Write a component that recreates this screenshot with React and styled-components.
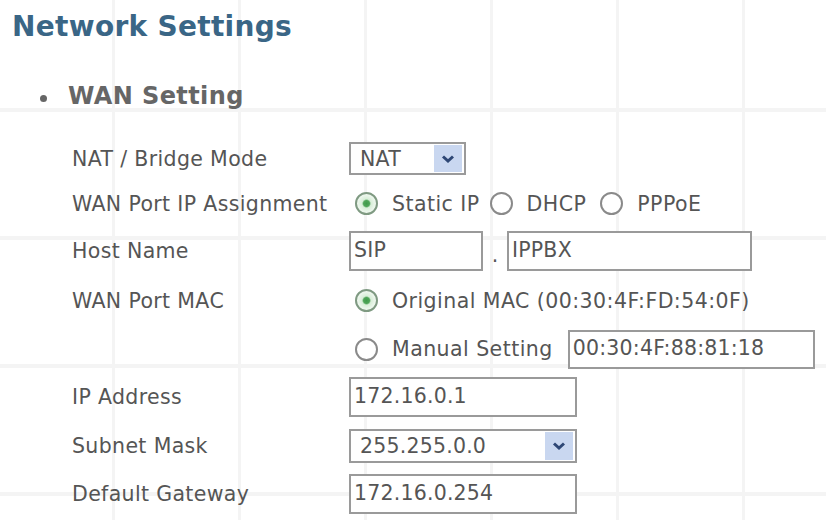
import React from "react";
import styled, { createGlobalStyle } from "styled-components";

const GlobalStyle = createGlobalStyle`
  html, body {
    margin: 0;
    padding: 0;
    background-color: #fff;
  }
  body {
    background-image:
      linear-gradient(90deg, transparent 0, transparent 112px, #f4f4f4 112px, #f4f4f4 115px, transparent 115px),
      linear-gradient(180deg, transparent 0, transparent 108px, #f4f4f4 108px, #f4f4f4 112px, transparent 112px);
    background-size: 126px 128px;
    background-position: 0 0;
    min-height: 520px;
  }
`;

const Page = styled.div`
  padding: 10px 0 0 12px;
  font-family: "DejaVu Sans", Verdana, sans-serif;
  color: #555;
`;

const Title = styled.h1`
  margin: 0;
  font-size: 28px;
  line-height: 34px;
  font-weight: bold;
  color: #3a6686;
  letter-spacing: 0.3px;
`;

const Section = styled.h2`
  display: flex;
  align-items: center;
  margin: 33px 0 0 28px;
  height: 38px;
  font-size: 24px;
  font-weight: bold;
  color: #666;
  letter-spacing: 0.4px;
`;

const Bullet = styled.span`
  width: 7px;
  height: 7px;
  border-radius: 50%;
  background: #666;
  margin-right: 21px;
  margin-top: 4px;
`;

const Form = styled.div`
  margin: 21px 0 0 60px;
  display: flex;
  flex-direction: column;
`;

const Row = styled.div`
  display: grid;
  grid-template-columns: 277px auto;
  align-items: center;
  height: ${({ $h }) => $h}px;
  font-size: 20.5px;
`;

const Label = styled.span`
  color: #555;
  white-space: nowrap;
  letter-spacing: 0.35px;
`;

const Controls = styled.div`
  display: flex;
  align-items: center;
`;

const TextBox = styled.input`
  box-sizing: border-box;
  width: ${({ $w }) => $w}px;
  height: ${({ $h }) => $h || 40}px;
  margin: 0;
  padding: 0 0 2px 3px;
  border: 2px solid #9a9a9a;
  background: #fff;
  font-family: "DejaVu Sans", Verdana, sans-serif;
  font-size: 20.5px;
  letter-spacing: 0.2px;
  color: #555;
  outline: none;
`;

const SelectBox = styled.div`
  box-sizing: border-box;
  display: flex;
  align-items: center;
  justify-content: space-between;
  width: ${({ $w }) => $w}px;
  height: ${({ $h }) => $h}px;
  padding: 0 2px 0 9px;
  border: 2px solid #9a9a9a;
  background: #fff;
  color: #555;
  letter-spacing: 0.2px;
`;

const ArrowButton = styled.span`
  display: flex;
  align-items: center;
  justify-content: center;
  width: 28px;
  height: ${({ $h }) => $h}px;
  background: #c9d7f0;
`;

const Radio = styled.span`
  box-sizing: border-box;
  flex: none;
  width: 23px;
  height: 23px;
  margin: 0 14px 0 6px;
  border-radius: 50%;
  border: 2px solid ${({ $checked }) => ($checked ? "#7f9a82" : "#8a8a8a")};
  background: ${({ $checked }) =>
    $checked
      ? "radial-gradient(circle, #3f9a4a 0, #4fa558 3px, #d8eed8 4.5px, #eef7ee 9px)"
      : "#fff"};
`;

const Option = styled.label`
  display: flex;
  align-items: center;
  margin-right: ${({ $mr }) => $mr || 0}px;
  color: #555;
  white-space: nowrap;
  letter-spacing: 0.45px;
`;

const Dot = styled.span`
  width: 24px;
  text-align: center;
  align-self: flex-end;
  margin-bottom: 4px;
`;

function Chevron() {
  return (
    <svg width="14" height="10" viewBox="0 0 14 10">
      <path d="M2 2.5 L7 7 L12 2.5" fill="none" stroke="#2e4775" strokeWidth="3" />
    </svg>
  );
}

function Select({ value, width, height }) {
  return (
    <SelectBox $w={width} $h={height}>
      <span>{value}</span>
      <ArrowButton $h={height - 6}>
        <Chevron />
      </ArrowButton>
    </SelectBox>
  );
}

function RadioOption({ checked, children, mr }) {
  return (
    <Option $mr={mr}>
      <Radio $checked={checked} />
      {children}
    </Option>
  );
}

export default function App() {
  return (
    <>
      <GlobalStyle />
      <Page>
        <Title>Network Settings</Title>
        <Section>
          <Bullet />
          WAN Setting
        </Section>
        <Form>
          <Row $h={45}>
            <Label>NAT / Bridge Mode</Label>
            <Controls>
              <Select value="NAT" width={117} height={33} />
            </Controls>
          </Row>
          <Row $h={45}>
            <Label>WAN Port IP Assignment</Label>
            <Controls>
              <RadioOption checked mr={4}>Static IP</RadioOption>
              <RadioOption mr={8}>DHCP</RadioOption>
              <RadioOption>PPPoE</RadioOption>
            </Controls>
          </Row>
          <Row $h={49}>
            <Label>Host Name</Label>
            <Controls>
              <TextBox $w={134} defaultValue="SIP" readOnly />
              <Dot>.</Dot>
              <TextBox $w={245} defaultValue="IPPBX" readOnly />
            </Controls>
          </Row>
          <Row $h={51}>
            <Label>WAN Port MAC</Label>
            <Controls>
              <RadioOption checked>Original MAC (00:30:4F:FD:54:0F)</RadioOption>
            </Controls>
          </Row>
          <Row $h={46}>
            <Label />
            <Controls>
              <RadioOption mr={15}>Manual Setting</RadioOption>
              <TextBox $w={247} $h={39} defaultValue="00:30:4F:88:81:18" readOnly />
            </Controls>
          </Row>
          <Row $h={50}>
            <Label>IP Address</Label>
            <Controls>
              <TextBox $w={228} defaultValue="172.16.0.1" readOnly />
            </Controls>
          </Row>
          <Row $h={48}>
            <Label>Subnet Mask</Label>
            <Controls>
              <Select value="255.255.0.0" width={228} height={34} />
            </Controls>
          </Row>
          <Row $h={48}>
            <Label>Default Gateway</Label>
            <Controls>
              <TextBox $w={228} defaultValue="172.16.0.254" readOnly />
            </Controls>
          </Row>
        </Form>
      </Page>
    </>
  );
}
